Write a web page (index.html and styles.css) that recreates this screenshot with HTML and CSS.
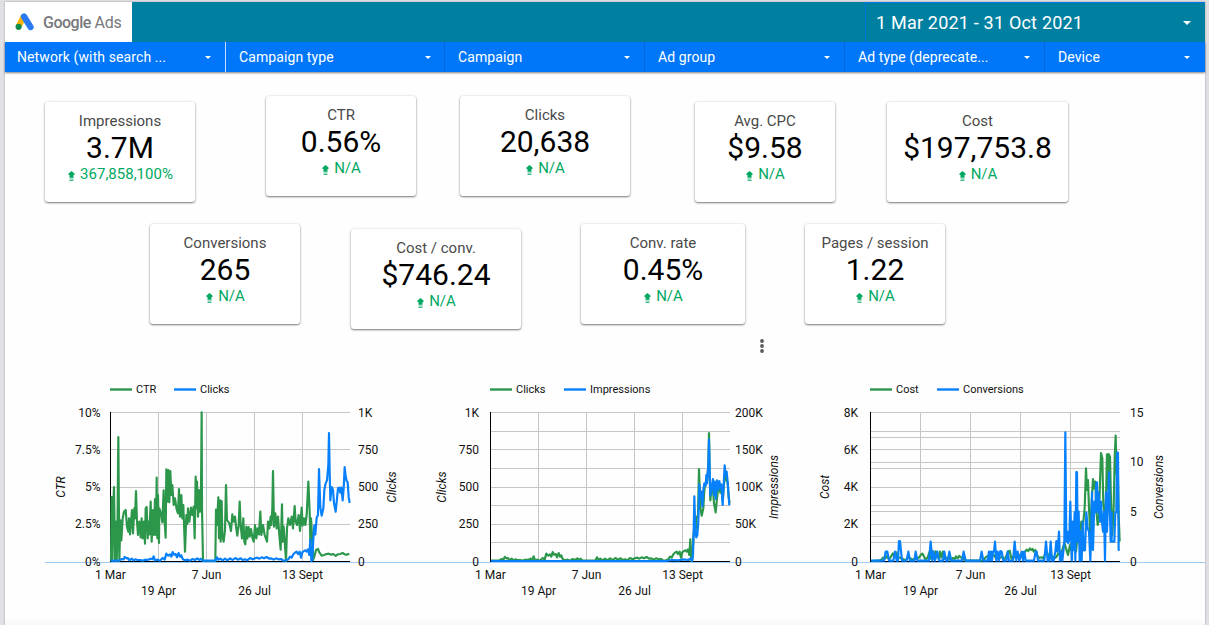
FILE: index.html
```html
<!doctype html>
<html>

<head>
    <meta charset="utf-8">
    <title>Google Ads</title>
    <link rel="stylesheet" href="styles.css">
</head>

<body>
    <div class="page">
        <header class="top">
            <div class="logo">
                <svg width="20" height="18" viewBox="0 0 20 18">
                    <path d="M8.6 3.6L3.8 13" stroke="#fbb40c" stroke-width="6" />
                    <path d="M9 3.5l6.6 10.6" stroke="#2a7bf3" stroke-width="6.2" stroke-linecap="round" />
                    <circle cx="3.6" cy="13.8" r="3.1" fill="#118c4b" />
                </svg>
                <span><b>Google</b> Ads</span>
            </div>
            <div class="date">
                <span>1 Mar 2021 - 31 Oct 2021</span>
                <i class="caret big"></i>
            </div>
        </header>
        <nav class="filters">
            <div class="filter w-network"><span>Network (with search ...</span><i class="caret"></i></div>
            <div class="filter w-type"><span>Campaign type</span><i class="caret"></i></div>
            <div class="filter"><span>Campaign</span><i class="caret"></i></div>
            <div class="filter"><span>Ad group</span><i class="caret"></i></div>
            <div class="filter"><span>Ad type (deprecate...</span><i class="caret"></i></div>
            <div class="filter w-device"><span>Device</span><i class="caret"></i></div>
        </nav>

        <svg class="defs" width="0" height="0">
            <symbol id="up" viewBox="0 0 7 10">
                <path d="M3.5 0L6.500 2.500V4H5.500V6h-4V4H.5V2.500z" fill="#00a862" />
                <path d="M1.5 6.500h4M1.5 8h4M1.500 9.500h4" stroke="#00a862" opacity=".75" />
            </symbol>
        </svg>

        <section class="cards first">
            <div class="card impressions">
                <label>Impressions</label>
                <strong>3.7M</strong>
                <em><svg><use href="#up" /></svg>367,858,100%</em>
            </div>
            <div class="card ctr">
                <label>CTR</label>
                <strong>0.56%</strong>
                <em><svg><use href="#up" /></svg>N/A</em>
            </div>
            <div class="card clicks">
                <label>Clicks</label>
                <strong>20,638</strong>
                <em><svg><use href="#up" /></svg>N/A</em>
            </div>
            <div class="card cpc">
                <label>Avg. CPC</label>
                <strong>$9.58</strong>
                <em><svg><use href="#up" /></svg>N/A</em>
            </div>
            <div class="card cost">
                <label>Cost</label>
                <strong>$197,753.8</strong>
                <em><svg><use href="#up" /></svg>N/A</em>
            </div>
        </section>

        <section class="cards second">
            <div class="card conversions">
                <label>Conversions</label>
                <strong>265</strong>
                <em><svg><use href="#up" /></svg>N/A</em>
            </div>
            <div class="card cost-conv">
                <label>Cost / conv.</label>
                <strong>$746.24</strong>
                <em><svg><use href="#up" /></svg>N/A</em>
            </div>
            <div class="card conv-rate">
                <label>Conv. rate</label>
                <strong>0.45%</strong>
                <em><svg><use href="#up" /></svg>N/A</em>
            </div>
            <div class="card pages">
                <label>Pages / session</label>
                <strong>1.22</strong>
                <em><svg><use href="#up" /></svg>N/A</em>
            </div>
        </section>

        <div class="more">
            <svg width="6" height="14" viewBox="0 0 6 14" fill="#58595c">
                <circle cx="3" cy="2" r="1.9" />
                <circle cx="3" cy="7" r="1.9" />
                <circle cx="3" cy="12" r="1.9" />
            </svg>
        </div>

        <section class="charts">
            <!-- CTR / Clicks -->
            <svg class="chart" width="380" height="245" viewBox="0 0 380 245">
                <path class="key green" d="M70 14.5h22" />
                <text class="name" x="96" y="18">CTR</text>
                <path class="key blue" d="M134 14.5h22" />
                <text class="name" x="160" y="18">Clicks</text>
                <path class="grid" d="M70 37.5h240M70 74.5h240M70 112.5h240M70 149.5h240M118.5 37v149M166.5 37v149M214.5 37v149M262.5 37v149" />
                <path class="base" d="M5 187.5h375" />
                <path class="axis" d="M70.5 37v150M70 186.5h240" />
                <g transform="scale(.33333)">
                    <polyline class="green" points="213,558 215,366 217,558 219,420 222,336 225,558 228,440 230,558 232,500 235,186 238,558 241,436 244,496 248,430 252,410 257,405 261,455 265,470 267,430 270,478 276,405 279,475 283,400 285,430 288,348 291,440 294,480 298,440 302,487 305,430 308,490 312,440 315,506 317,400 320,396 323,490 326,440 328,478 332,380 335,500 339,405 342,480 345,372 348,480 350,308 352,490 354,360 357,504 358,400 363,415 367,442 371,346 374,440 377,488 379,283 382,380 385,285 388,382 391,288 394,360 397,330 401,390 405,370 410,403 414,415 417,342 420,425 424,360 427,430 430,390 435,530 439,420 442,447 444,400 448,440 453,398 457,420 461,395 464,490 467,305 470,400 471,320 474,425 477,345 480,410 483,350 485,112 486,400 489,558 526,558 528,404 531,450 535,367 537,490 540,376 542,500 545,378 547,480 551,500 555,465 558,330 561,435 568,445 573,468 577,418 581,440 585,425 588,455 592,482 596,450 599,380 602,450 606,490 610,430 613,500 616,508 619,455 622,490 626,456 629,485 633,462 637,487 641,500 645,450 649,490 653,460 657,478 661,410 664,480 669,450 674,480 681,500 684,440 688,460 692,425 694,450 697,400 699,288 702,455 706,415 710,460 714,425 718,480 722,524 726,388 728,500 731,455 735,512 738,558 741,460 745,430 750,450 755,425 759,460 764,393 767,440 771,450 776,420 780,468 785,398 788,452 792,430 796,450 800,420 805,320 809,410 811,500 813,430 816,480 819,555 823,545 828,525 834,522 838,532 845,542 852,540 860,537 866,536 873,539 880,537 887,543 893,538 900,537 908,534 914,538 920,539 928,536" />
                    <polyline class="blue" points="213,557 230,557 238,556 245,552 251,553 254,546 260,550 264,549 268,556 275,551 281,556 286,553 292,555 300,555 308,557 315,554 320,555 325,554 332,551 337,553 341,544 345,556 353,554 360,557 368,549 374,554 379,536 385,542 390,538 394,545 398,531 402,539 407,537 411,547 416,534 420,545 424,541 428,552 435,556 443,554 450,557 458,552 465,555 472,550 478,555 482,551 488,557 526,557 531,547 535,554 541,551 548,556 555,551 562,556 570,550 578,555 586,549 594,554 602,550 608,555 615,553 622,556 630,549 638,553 645,550 652,548 658,551 665,547 672,550 680,546 687,551 694,550 701,554 708,550 716,553 723,552 730,557 738,556 745,553 750,545 755,548 760,538 765,533 770,530 774,537 779,530 783,548 787,532 792,528 797,526 800,530 804,523 808,540 811,493 814,558 817,555 820,490 823,451 826,478 830,428 834,420 837,282 841,398 845,422 850,400 853,345 857,325 861,316 865,270 867,174 869,290 871,376 875,336 879,345 882,385 887,410 891,370 894,340 898,338 901,353 904,338 908,376 911,340 914,276 917,304 920,318 923,322 926,365 929,384" />
                </g>
                <g class="left">
                    <text x="60.500" y="42">10%</text>
                    <text x="60.500" y="79">7.5%</text>
                    <text x="60.500" y="116">5%</text>
                    <text x="60.500" y="153">2.5%</text>
                    <text x="60.500" y="191">0%</text>
                </g>
                <g class="right">
                    <text x="318" y="42">1K</text>
                    <text x="318" y="79">750</text>
                    <text x="318" y="116">500</text>
                    <text x="318" y="153">250</text>
                    <text x="318" y="191">0</text>
                </g>
                <g class="bottom">
                    <text x="70.500" y="204">1 Mar</text>
                    <text x="118.500" y="220">19 Apr</text>
                    <text x="166.500" y="204">7 Jun</text>
                    <text x="214.500" y="220">26 Jul</text>
                    <text x="262.500" y="204">13 Sept</text>
                </g>
                <text class="title" transform="translate(25 112) rotate(-90)">CTR</text>
                <text class="title" transform="translate(356 112) rotate(-90)">Clicks</text>
            </svg>

            <!-- Clicks / Impressions -->
            <svg class="chart" width="380" height="245" viewBox="0 0 380 245">
                <path class="key green" d="M70 14.5h22" />
                <text class="name" x="96" y="18">Clicks</text>
                <path class="key blue" d="M144 14.5h22" />
                <text class="name" x="170" y="18">Impressions</text>
                <path class="grid" d="M70 37.5h240M70 56.5h240M70 74.5h240M70 93.5h240M70 112.5h240M70 130.5h240M70 149.5h240M70 167.5h240M118.5 37v149M166.5 37v149M214.5 37v149M262.5 37v149" />
                <path class="base" d="M0 187.5h380" />
                <path class="axis" d="M70.5 37v150M70 186.5h240" />
                <g transform="scale(.33333)">
                    <polyline class="green" points="213,557 238,556 245,552 251,553 254,546 260,550 264,549 268,556 275,551 281,556 286,553 292,555 300,555 308,557 315,554 320,555 325,554 332,551 337,553 341,544 345,556 353,554 360,557 368,549 374,554 379,536 385,542 390,538 394,545 398,531 402,539 407,537 411,547 416,534 420,545 424,541 428,552 435,556 443,554 450,557 458,552 465,555 472,550 478,555 482,551 488,557 526,557 531,547 535,554 541,551 548,556 555,551 562,556 570,550 578,555 586,549 594,554 602,550 608,555 615,553 622,556 630,549 638,553 645,550 652,548 658,551 665,547 672,550 680,546 687,551 694,550 701,554 708,550 716,553 723,552 730,557 738,556 745,553 750,545 755,548 760,538 765,533 770,530 774,537 779,530 783,548 787,532 792,528 797,526 800,530 804,523 808,540 811,493 814,558 817,555 820,490 823,451 826,478 830,428 834,420 837,282 841,398 845,422 850,400 853,345 857,325 861,316 865,270 867,174 869,290 871,376 875,336 879,345 882,385 887,412 891,370 894,340 898,338 901,353 904,338 908,376 911,340 914,300 917,304 920,318 923,322 926,365 929,384" />
                    <polyline class="blue" points="213,558 740,558 755,555 775,556 790,553 805,555 812,550 816,558 819,540 821,470 823,364 826,470 829,487 832,480 835,440 838,328 841,366 844,350 847,394 850,345 853,325 857,332 859,300 861,325 865,270 867,194 869,290 871,362 875,336 879,312 882,360 884,320 887,372 891,316 894,345 898,318 901,340 904,328 908,390 911,330 914,271 917,300 920,290 923,322 926,365 928,391" />
                </g>
                <g class="left">
                    <text x="59" y="42">1K</text>
                    <text x="59" y="79">750</text>
                    <text x="59" y="116">500</text>
                    <text x="59" y="153">250</text>
                    <text x="59" y="191">0</text>
                </g>
                <g class="right">
                    <text x="315" y="42">200K</text>
                    <text x="315" y="79">150K</text>
                    <text x="315" y="116">100K</text>
                    <text x="315" y="153">50K</text>
                    <text x="315" y="191">0</text>
                </g>
                <g class="bottom">
                    <text x="70.500" y="204">1 Mar</text>
                    <text x="118.500" y="220">19 Apr</text>
                    <text x="166.500" y="204">7 Jun</text>
                    <text x="214.500" y="220">26 Jul</text>
                    <text x="262.500" y="204">13 Sept</text>
                </g>
                <text class="title" transform="translate(26 112) rotate(-90)">Clicks</text>
                <text class="title" transform="translate(358 112) rotate(-90)">Impressions</text>
            </svg>

            <!-- Cost / Conversions -->
            <svg class="chart" width="405" height="245" viewBox="0 0 405 245">
                <path class="key green" d="M70 14.5h22" />
                <text class="name" x="96" y="18">Cost</text>
                <path class="key blue" d="M137 14.5h22" />
                <text class="name" x="163" y="18">Conversions</text>
                <path class="grid" d="M70 37.5h250M70 56.5h250M70 62.500h250M70 74.5h250M70 87.5h250M70 93.5h250M70 112.5h250M70 130.5h250M70 136.5h250M70 149.5h250M70 161.5h250M70 167.5h250M120.5 37v149M170.5 37v149M220.5 37v149M270.5 37v149" />
                <path class="base" d="M0 187.5h405" />
                <path class="axis" d="M70.5 37v150M70 186.5h250" />
                <g transform="scale(.33333)">
                    <polyline class="green" points="213,558 235,557 244,554 249,548 255,551 261,543 267,553 273,545 279,535 284,545 289,532 294,546 300,548 308,552 316,556 325,547 334,552 343,553 350,550 357,548 362,540 367,536 372,544 376,554 383,548 389,530 394,552 398,528 403,550 407,529 412,545 416,550 420,530 424,548 429,530 434,552 440,549 446,546 452,556 458,549 464,552 468,544 473,550 478,543 484,548 490,552 496,557 545,557 553,552 559,545 565,542 571,535 576,544 582,540 588,550 594,546 600,548 606,545 612,553 618,545 624,530 629,527 634,550 640,545 646,547 652,540 658,543 664,535 670,532 676,530 680,524 685,528 690,520 694,525 698,522 701,530 706,525 711,540 717,549 724,547 730,550 736,535 741,532 745,542 751,549 757,544 763,550 769,546 775,535 781,540 787,525 793,503 798,520 804,540 810,510 816,530 822,495 828,530 834,470 839,500 844,440 849,450 854,400 858,280 861,345 864,315 867,400 871,480 875,380 879,312 882,340 886,320 889,405 893,450 897,430 900,320 903,234 907,250 910,390 915,420 918,370 921,238 924,340 926,237 930,245 933,380 937,480 941,400 944,250 947,182 950,300 953,255 956,420 959,500" />
                    <polyline class="blue" points="213,557 252,557 257,530 262,530 267,557 280,557 285,530 290,557 294,557 297,498 300,498 306,557 320,557 325,530 330,557 343,557 347,530 352,557 387,557 392,500 397,557 401,530 405,557 412,530 417,557 429,557 433,530 438,557 444,557 448,530 454,557 486,557 491,530 497,557 540,557 545,530 550,557 563,557 567,530 570,557 573,530 576,557 579,530 582,530 585,500 589,557 593,530 597,557 601,528 605,530 610,557 619,557 623,530 627,557 639,557 644,500 649,557 653,530 658,557 666,530 669,557 673,530 677,557 702,557 707,530 710,530 714,557 733,557 738,500 743,557 748,557 752,500 756,557 761,557 766,530 769,498 772,530 775,498 777,470 780,557 784,530 787,557 790,530 793,500 796,172 799,500 802,470 805,505 808,490 811,380 814,505 816,557 818,440 820,525 824,412 826,557 829,291 831,292 833,500 836,410 839,557 842,470 845,557 848,440 851,526 855,526 859,412 863,460 867,470 871,557 874,470 876,352 879,525 883,380 886,412 889,324 891,322 893,412 896,352 900,440 903,380 906,440 909,470 912,410 915,557 918,352 921,470 924,380 927,291 929,380 932,500 935,412 935,500 943,500 946,412 949,412 951,232 954,233 956,525 959,525" />
                </g>
                <g class="left">
                    <text x="58" y="42">8K</text>
                    <text x="58" y="79">6K</text>
                    <text x="58" y="116">4K</text>
                    <text x="58" y="153">2K</text>
                    <text x="58" y="191">0</text>
                </g>
                <g class="right">
                    <text x="330" y="42">15</text>
                    <text x="330" y="91">10</text>
                    <text x="330" y="141">5</text>
                    <text x="330" y="191">0</text>
                </g>
                <g class="bottom">
                    <text x="70.500" y="204">1 Mar</text>
                    <text x="120.500" y="220">19 Apr</text>
                    <text x="170.500" y="204">7 Jun</text>
                    <text x="220.500" y="220">26 Jul</text>
                    <text x="270.500" y="204">13 Sept</text>
                </g>
                <text class="title" transform="translate(29 112) rotate(-90)">Cost</text>
                <text class="title" transform="translate(363 112) rotate(-90)">Conversions</text>
            </svg>
        </section>
    </div>
</body>

</html>
```

FILE: styles.css
```css
* {
    box-sizing: border-box;
}

body {
    margin: 0;
    padding: 2px 4px 0 5px;
    height: 625px;
    overflow: hidden;
    background: #e1e1e5;
    font-family: Roboto, "Liberation Sans", sans-serif;
}

.page {
    width: 1200px;
    height: 623px;
    background: linear-gradient(#fefefe 617px, #f8f6fa 623px);
    box-shadow: 0 0 2px rgba(0, 0, 0, 0.3);
}

.top {
    height: 40px;
    display: flex;
    justify-content: space-between;
    background: #0080a1;
}

.logo {
    width: 127px;
    padding-left: 10px;
    display: flex;
    align-items: center;
    background: #fff;
    color: #77787b;
    font-size: 16px;
}

.logo svg {
    flex: none;
}

.logo span {
    margin-left: 8px;
    white-space: nowrap;
    letter-spacing: -0.2px;
}

.logo b {
    font-weight: 500;
    letter-spacing: -0.5px;
}

.date {
    width: 340px;
    padding: 0 14px 0 10px;
    display: flex;
    align-items: center;
    justify-content: space-between;
    border-left: 1px solid #0077d8;
    border-top: 1px solid #0077e0;
    color: #fff;
    font-size: 18px;
    letter-spacing: 0.2px;
}

.caret {
    border: 3.5px solid transparent;
    border-top-color: #fff;
    border-bottom: 0;
}

.caret.big {
    border-width: 4px 4.5px 0;
}

.filters {
    height: 30px;
    display: flex;
    background: #0077fa;
    box-shadow: 0 1px 2px rgba(0, 0, 0, 0.5);
}

.filter {
    width: 200px;
    padding: 0 14px 0 13px;
    display: flex;
    align-items: center;
    justify-content: space-between;
    border-right: 1px solid #0069dc;
    color: #fff;
    font-size: 14px;
    letter-spacing: 0.1px;
}

.w-network {
    width: 221px;
    padding-left: 12px;
    border-right-color: #c4dcfa;
}

.w-type {
    width: 219px;
    padding-right: 13px;
}

.w-device {
    width: 160px;
    padding-right: 15px;
    border: 0;
}

.defs {
    display: block;
}

.cards {
    display: flex;
    align-items: flex-start;
}

.first {
    height: 129px;
    padding: 24px 0 0 40px;
}

.second {
    height: 115px;
    padding: 23px 0 0 145px;
}

.card {
    height: 100px;
    padding-top: 9px;
    display: flex;
    flex-direction: column;
    align-items: center;
    border-radius: 3px;
    background: #fff;
    box-shadow: 0 1px 2px rgba(0, 0, 0, 0.5), 0 0 3px rgba(0, 0, 0, 0.1);
}

.card label {
    color: #4a4a4a;
    font-size: 15px;
    line-height: 20px;
}

.card strong {
    color: #000;
    font-size: 30px;
    font-weight: 400;
    line-height: 34px;
}

.card em {
    padding-left: 1px;
    display: flex;
    color: #00a862;
    font-size: 15px;
    font-style: normal;
    line-height: 18px;
}

.card em svg {
    width: 7px;
    height: 10px;
    margin: 6px 5px 0 0;
}

.impressions {
    width: 150px;
    margin-top: 6px;
}

.ctr {
    width: 150px;
    margin-left: 71px;
}

.clicks {
    width: 170px;
    margin-left: 44px;
}

.cpc {
    width: 140px;
    margin: 6px 0 0 65px;
}

.cost {
    width: 181px;
    margin: 6px 0 0 52px;
}

.conversions {
    width: 150px;
}

.cost-conv {
    width: 170px;
    margin: 5px 0 0 51px;
}

.conv-rate {
    width: 164px;
    margin-left: 60px;
}

.pages {
    width: 140px;
    margin-left: 60px;
}

.more {
    height: 59px;
    padding: 23px 0 0 754px;
}

.more svg {
    display: block;
}

.charts {
    display: flex;
    padding-left: 35px;
}

.chart {
    flex: none;
    font-size: 12px;
}

.chart text {
    fill: #111;
}

.chart .name {
    font-size: 11px;
}

.chart polyline {
    fill: none;
    stroke-width: 6.5;
    stroke-linejoin: round;
}

.green {
    stroke: #2c974b;
}

.blue {
    stroke: #0680fb;
}

.key {
    stroke-width: 2.4;
}

.grid {
    stroke: #c6c6c6;
}

.axis {
    fill: none;
    stroke: #000;
}

.base {
    stroke: #9fcdf8;
}

.left {
    text-anchor: end;
}

.bottom,
.title {
    text-anchor: middle;
}

.title {
    font-style: italic;
}
```
